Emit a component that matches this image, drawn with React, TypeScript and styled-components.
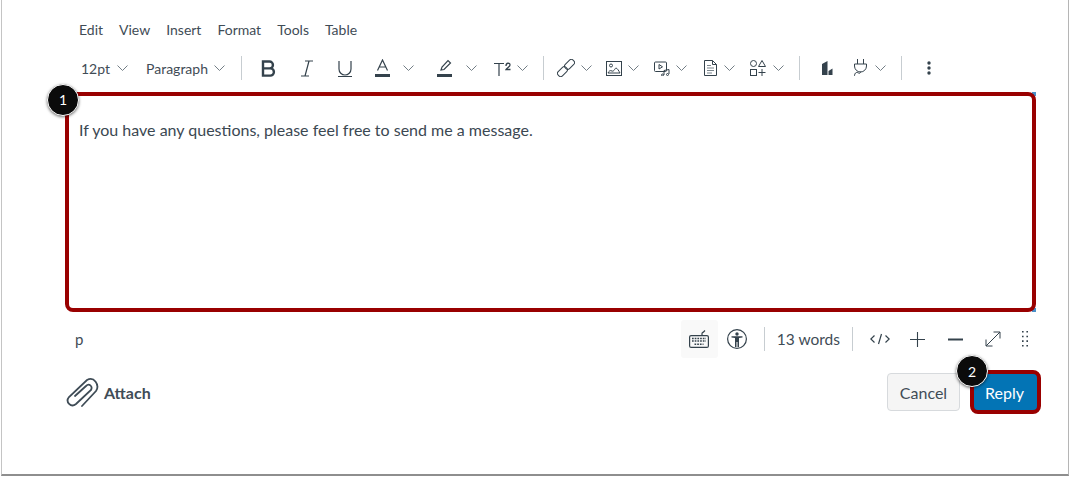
import React from "react";
import styled, { createGlobalStyle } from "styled-components";

const Global = createGlobalStyle`
  html { background: #fff; }
  html, body { margin: 0; padding: 0; }
  body { font-family: Lato, "Liberation Sans", sans-serif; color: #2d3b45; }
`;

const Frame = styled.div`
  box-sizing: border-box;
  width: 1068px;
  height: 476px;
  margin-left: 1px;
  border-left: 1px solid #c4c4c4;
  border-right: 1px solid #b5b5b5;
  border-bottom: 2px solid #8e8e8e;
  padding: 19px 32px 0 63px;
  display: flex;
  flex-direction: column;
`;

const MenuBar = styled.div`
  display: flex;
  gap: 16px;
  height: 20px;
  align-items: center;
  padding-left: 14px;
  font-size: 14px;
  color: #3f4c56;
`;

const Toolbar = styled.div`
  display: flex;
  align-items: center;
  height: 34px;
  margin-top: 12px;
  padding-left: 16px;
`;

const Label = styled.span<{ $ml?: number }>`
  font-size: 14px;
  margin-left: ${(p) => p.$ml ?? 0}px;
  color: #3f4c56;
`;

const Slot = styled.span<{ $ml: number; $w: number }>`
  display: inline-flex;
  justify-content: center;
  align-items: center;
  flex: none;
  margin-left: ${(p) => p.$ml}px;
  width: ${(p) => p.$w}px;
  svg { display: block; }
`;

const Sep = styled.span<{ $ml: number; $h?: number }>`
  flex: none;
  width: 1px;
  height: ${(p) => p.$h ?? 24}px;
  margin-left: ${(p) => p.$ml}px;
  background: #c7cdd1;
`;

const Editor = styled.div`
  position: relative;
  box-sizing: border-box;
  height: 220px;
  margin-top: 7px;
  border: 4px solid #990000;
  border-radius: 8px;
  padding: 23px 10px;
  font-size: 16px;
  line-height: 22px;
  color: #3b4852;
`;

const CornerTick = styled.span<{ $bottom?: boolean }>`
  position: absolute;
  z-index: -1;
  right: -4px;
  ${(p) => (p.$bottom ? "bottom: -4px;" : "top: -4px;")}
  width: 4px;
  height: 4px;
  background: #4a90c8;
`;

const Badge = styled.span<{ $l: number; $t: number }>`
  position: absolute;
  left: ${(p) => p.$l}px;
  top: ${(p) => p.$t}px;
  box-sizing: border-box;
  width: 32px;
  height: 32px;
  border-radius: 50%;
  background: #0b0b0b;
  border: 1px solid #fff;
  box-shadow: 0 1px 3px rgba(0, 0, 0, 0.55);
  color: #fff;
  display: flex;
  align-items: center;
  justify-content: center;
  font-size: 14px;
  font-weight: 400;
`;

const StatusBar = styled.div`
  display: flex;
  align-items: center;
  height: 38px;
  margin-top: 8px;
  padding: 0 8px 0 10px;
  color: #3f4c56;
  font-size: 16px;
`;

const PathTag = styled.span`
  font-size: 15px;
  margin-right: auto;
`;

const KeyButton = styled.span`
  display: flex;
  align-items: center;
  justify-content: center;
  width: 37px;
  height: 38px;
  background: #f9f9f9;
  border-radius: 3px;
`;

const Words = styled.span`
  margin-left: 12px;
  font-size: 15.5px;
  white-space: nowrap;
`;

const Footer = styled.div`
  display: flex;
  align-items: center;
  height: 44px;
  margin-top: 12px;
  position: relative;
`;

const Attach = styled.div`
  display: flex;
  align-items: center;
  gap: 5px;
  margin-right: auto;
  margin-left: 1px;
  font-size: 16px;
  font-weight: 700;
  color: #3f4c56;
`;

const Cancel = styled.div`
  box-sizing: border-box;
  width: 73px;
  height: 38px;
  display: flex;
  align-items: center;
  justify-content: center;
  background: #f5f5f5;
  border: 1px solid #d7dadd;
  border-radius: 4px;
  font-size: 16px;
  color: #3f4c56;
`;

const Reply = styled.div`
  box-sizing: border-box;
  width: 71px;
  height: 44px;
  margin-left: 10px;
  margin-right: -5px;
  padding-right: 2px;
  display: flex;
  align-items: center;
  justify-content: center;
  background: #0374b5;
  border: 4px solid #990000;
  border-radius: 8px;
  font-size: 16px;
  color: #fff;
`;

const C = "#34424c";

const Chevron = ({ ml }: { ml: number }) => (
  <Slot $ml={ml} $w={11}>
    <svg width="11" height="6" viewBox="0 0 11 6" fill="none" stroke="#737e86" strokeWidth="1">
      <path d="M.5.5l5 5 5-5" />
    </svg>
  </Slot>
);

const Icon = ({ ml, w, h, children, fill }: { ml: number; w: number; h: number; children: React.ReactNode; fill?: boolean }) => (
  <Slot $ml={ml} $w={w}>
    <svg width={w} height={h} viewBox={`0 0 ${w} ${h}`} fill={fill ? C : "none"} stroke={fill ? "none" : C} strokeWidth="1">
      {children}
    </svg>
  </Slot>
);

export default function App() {
  return (
    <Frame>
      <Global />
      <MenuBar>
        <span>Edit</span>
        <span>View</span>
        <span>Insert</span>
        <span>Format</span>
        <span>Tools</span>
        <span>Table</span>
      </MenuBar>
      <Toolbar>
        <Label>12pt</Label>
        <Chevron ml={7} />
        <Label $ml={18}>Paragraph</Label>
        <Chevron ml={6} />
        <Sep $ml={16} />
        <Icon ml={19} w={15} h={17}>
          <path strokeWidth="2.4" d="M2 1.500h6.500a3.400 3.400 0 010 6.900H2zM2 8.400h7.300a3.600 3.600 0 010 7.200H2z" />
        </Icon>
        <Icon ml={25} w={12} h={17}>
          <path d="M4 1h8M0 16h8M8 1L4 16" strokeWidth="1.200" />
        </Icon>
        <Icon ml={25} w={14} h={17}>
          <path d="M1 1v8a6 6 0 0012 0V1M0 16.500h14" strokeWidth="1.200" />
        </Icon>
        <Icon ml={23} w={15} h={18}>
          <path d="M2.500 11.500L7.500 1l5 10.500M4 8h7" strokeWidth="1.200" />
          <path d="M0 15h15v3H0z" fill={C} stroke="none" />
        </Icon>
        <Chevron ml={13} />
        <Icon ml={23} w={15} h={18}>
          <path d="M4 11l1-3 6-6.500 2.500 2.500L7 10.500z" strokeWidth="1.200" />
          <path d="M0 15h15v3H0z" fill={C} stroke="none" />
        </Icon>
        <Chevron ml={14} />
        <Icon ml={17} w={17} h={17}>
          <path d="M0 3.500h10M5 3.500V16" strokeWidth="1.200" />
          <path d="M12 6c0-3.500 4-3.500 4-1 0 2-3 2.500-4 4.500h4.500" strokeWidth="1.300" />
        </Icon>
        <Chevron ml={6} />
        <Sep $ml={15} />
        <Icon ml={13} w={18} h={18}>
          <g transform="rotate(-45 9 9)">
            <rect x="-1.500" y="6" width="11" height="6" rx="2.500" />
            <rect x="8.500" y="6" width="11" height="6" rx="2.500" />
          </g>
        </Icon>
        <Chevron ml={6} />
        <Icon ml={14} w={16} h={15}>
          <rect x=".5" y=".5" width="15" height="14" />
          <circle cx="5" cy="4.500" r="1.500" />
          <path d="M2 12c1-2 2-3 4-2s3-3 4-3 3 3 4 5z" />
        </Icon>
        <Chevron ml={6} />
        <Icon ml={15} w={16} h={15}>
          <rect x=".5" y="1" width="12" height="9.500" rx="1" />
          <path d="M5 3.500l3.500 2.300L5 8z" />
          <path d="M10 14V9.500l5-1V13" />
          <circle cx="8.500" cy="14" r="1" />
          <circle cx="13.500" cy="13.500" r="1" />
        </Icon>
        <Chevron ml={6} />
        <Icon ml={17} w={13} h={16}>
          <path d="M.5.500h8l4 4v11H.5z" />
          <path d="M8.500.500v4h4" />
          <path d="M3 5h4v1H3zM3 7.500h7v1H3zM3 10h7v1H3zM3 12.500h5v1H3z" fill="#7b868d" stroke="none" />
        </Icon>
        <Chevron ml={7} />
        <Icon ml={15} w={16} h={16}>
          <circle cx="3.500" cy="3.500" r="3" />
          <path d="M12 .5l3.500 6h-7z" />
          <rect x=".5" y="9.500" width="6" height="6" />
          <path d="M12 9v7M8.500 12.500H15.500" />
        </Icon>
        <Chevron ml={7} />
        <Sep $ml={15} />
        <Icon ml={22} w={11} h={14} fill>
          <path d="M0 3l5.500-3v14H0zM6.500 10l4-2.500V14h-4z" />
        </Icon>
        <Icon ml={20} w={15} h={18}>
          <path d="M4.500 0v5M10.500 0v5M1.500 5h12v2a5.500 5.500 0 01-12 0zM7.500 12.500c0 2-1 2-2 1.500s-2-1-3 0-1 3-1 3" />
        </Icon>
        <Chevron ml={7} />
        <Sep $ml={15} />
        <Icon ml={25} w={4} h={14} fill>
          <circle cx="2" cy="2" r="1.700" />
          <circle cx="2" cy="7" r="1.700" />
          <circle cx="2" cy="12" r="1.700" />
        </Icon>
      </Toolbar>
      <Editor>
        If you have any questions, please feel free to send me a message.
        <CornerTick />
        <CornerTick $bottom />
        <Badge $l={-22} $t={-12}>1</Badge>
      </Editor>
      <StatusBar>
        <PathTag>p</PathTag>
        <KeyButton>
          <svg width="20" height="18" viewBox="0 0 20 18" fill="none" stroke={C} strokeWidth="1.200">
            <rect x=".6" y="5.600" width="18.800" height="11.800" rx="1.500" />
            <path d="M13 5.500V3.500c0-1 1-1 1.500-1.500L16 .5" />
            <path d="M3 8.500h14M3 11h14M5.500 14.200h9" strokeWidth="1.600" strokeDasharray="1.700 1" />
          </svg>
        </KeyButton>
        <Slot $ml={9} $w={20}>
          <svg width="20" height="20" viewBox="0 0 20 20" fill="none" stroke={C} strokeWidth="1.200">
            <circle cx="10" cy="10" r="9.400" />
            <circle cx="10" cy="5" r="1.700" fill={C} stroke="none" />
            <path d="M4.500 7.200h11v1.400l-3.500.4v9h-1.500v-5h-1v5H8V9l-3.500-.4z" fill={C} stroke="none" />
          </svg>
        </Slot>
        <Sep $ml={17} $h={24} />
        <Words>13 words</Words>
        <Sep $ml={12} $h={24} />
        <Icon ml={17} w={20} h={12}>
          <path d="M4.500 2.500L.8 6l3.700 3.500M15.500 2.500L19.200 6l-3.700 3.500M11.500 1L8.500 11" strokeWidth="1.200" />
        </Icon>
        <Icon ml={20} w={15} h={15}>
          <path d="M7.500 0v15M0 7.500h15" strokeWidth="1.100" />
        </Icon>
        <Icon ml={23} w={15} h={15}>
          <path d="M0 7.500h15" strokeWidth="2" />
        </Icon>
        <Icon ml={22} w={16} h={16}>
          <path d="M1 15L15 1M8.500 1H15v6.500M1 8.500V15h6.500" strokeWidth="1" />
        </Icon>
        <Icon ml={21} w={6} h={16} fill>
          <path d="M0 0h1.600v1.600H0zM4.400 0H6v1.600H4.400zM0 4.700h1.600v1.600H0zM4.400 4.700H6v1.600H4.400zM0 9.300h1.600v1.600H0zM4.400 9.300H6v1.600H4.400zM0 14h1.600v1.600H0zM4.400 14H6v1.600H4.400z" />
        </Icon>
      </StatusBar>
      <Footer>
        <Attach>
          <svg width="33" height="31" viewBox="0 0 33 31" fill="none" stroke="#3f4c56" strokeWidth="1.800" strokeLinecap="round">
            <path d="M16 29L30 14C34 8 28-1 21 3L3 20C-1 25 5 31 10 27L25 13C27 9 23 6 20 9L9 19" />
          </svg>
          Attach
        </Attach>
        <Cancel>Cancel</Cancel>
        <Reply>Reply</Reply>
        <Badge $l={891} $t={-15}>2</Badge>
      </Footer>
    </Frame>
  );
}
